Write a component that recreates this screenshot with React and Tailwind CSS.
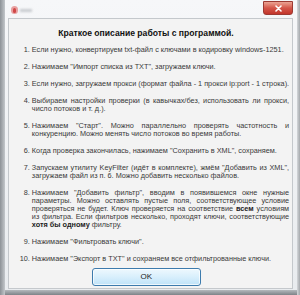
import React from 'react';

function Line({ j, children }) {
  return (
    <div className={`whitespace-nowrap h-[8px] leading-[8px] ${j ? 'text-justify [text-align-last:justify]' : ''}`}>
      {children}
    </div>
  );
}

function Item({ n, children }) {
  return (
    <div className="flex">
      <div className="w-[18px] shrink-0 text-right pr-[1px] leading-[8px]">{n}</div>
      <div className="flex-1 pl-[1px]">{children}</div>
    </div>
  );
}

export default function App() {
  return (
    <div className="w-[300px] h-[295px] flex bg-[#9a9fa4] overflow-hidden font-['Liberation_Sans',Arial,sans-serif]">
      {/* window behind, left edge */}
      <div className="w-[5px] h-full bg-gradient-to-r from-[#8d9297] to-[#c3c7cb]" />

      <div className="flex-1 flex flex-col">
        <div className="flex-1 flex flex-col bg-gradient-to-b from-[#f6f7f9] to-[#e9ecef] pl-[3px] pr-[4px] pb-[1px]">
          {/* title bar */}
          <div className="h-[18px] flex items-start justify-between">
            <div className="flex items-center gap-[2px] pt-[6px] pl-[3px]">
              <div className="w-[7px] h-[8px] rounded-full bg-[#e8a0a0] flex items-center justify-center">
                <div className="w-[3px] h-[5px] rounded-full bg-[#d04848]" />
              </div>
              <div className="w-[12px] h-[3px] bg-[#c9ccd0] blur-[1px]" />
            </div>
            <div className="mt-[1px] w-[30px] h-[14px] rounded-b-[3px] border border-[#9c3a33] bg-gradient-to-b from-[#eaa394] via-[#d4564a] to-[#c2352b] flex items-center justify-center">
              <svg width="7" height="7" viewBox="0 0 7 7">
                <path d="M1 1 L6 6 M6 1 L1 6" stroke="#ffffff" strokeWidth="1.6" strokeLinecap="round" />
              </svg>
            </div>
          </div>

          {/* dialog body */}
          <div className="flex-1 border border-[#c4c8cc] bg-[#f3f3f3] flex flex-col pl-[4px] pr-[3px] pt-[8px] text-[7.3px] text-[#3a3a3a]">
            <div className="text-center pr-[10px] text-[8.6px] font-bold text-[#111] leading-[12px] whitespace-nowrap">
              Краткое описание работы с программой.
            </div>

            <div className="mt-[7px] flex flex-col gap-[9px]">
              <Item n="1.">
                <Line>Если нужно, конвертируем txt-файл с ключами в кодировку windows-1251.</Line>
              </Item>
              <Item n="2.">
                <Line>Нажимаем "Импорт списка из TXT", загружаем ключи.</Line>
              </Item>
              <Item n="3.">
                <Line>Если нужно, загружаем прокси (формат файла - 1 прокси ip:port - 1 строка).</Line>
              </Item>
              <Item n="4.">
                <Line j>Выбираем настройки проверки (в кавычках/без, использовать ли прокси,</Line>
                <Line>число потоков и т. д.).</Line>
              </Item>
              <Item n="5.">
                <Line j>Нажимаем "Старт". Можно параллельно проверять частотность и</Line>
                <Line>конкуренцию. Можно менять число потоков во время работы.</Line>
              </Item>
              <Item n="6.">
                <Line>Когда проверка закончилась, нажимаем "Сохранить в XML", сохраняем.</Line>
              </Item>
              <Item n="7.">
                <Line j>Запускаем утилиту KeyFilter (идёт в комплекте), жмём "Добавить из XML",</Line>
                <Line>загружаем файл из п. 6. Можно добавить несколько файлов.</Line>
              </Item>
              <Item n="8.">
                <Line j>Нажимаем "Добавить фильтр", вводим в появившемся окне нужные</Line>
                <Line j>параметры. Можно оставлять пустые поля, соответствующее условие</Line>
                <Line j>
                  проверяться не будет. Ключ проверяется на соответствие <b className="text-[#222]">всем</b> условиям
                </Line>
                <Line j>из фильтра. Если фильтров несколько, проходят ключи, соответствующие</Line>
                <Line>
                  <b className="text-[#222]">хотя бы одному</b> фильтру.
                </Line>
              </Item>
              <Item n="9.">
                <Line>Нажимаем "Фильтровать ключи".</Line>
              </Item>
              <Item n="10.">
                <Line>Нажимаем "Экспорт в TXT" и сохраняем все отфильтрованные ключи.</Line>
              </Item>
            </div>

            <div className="mt-[5px] ml-[79px] w-[109px] h-[18px] rounded-[3px] border border-[#3d7bad] bg-gradient-to-b from-[#eef8fe] via-[#d8effc] to-[#bfe3f8] shadow-[inset_0_0_0_1px_rgba(255,255,255,0.7)] flex items-center justify-center text-[8px] text-[#222]">
              OK
            </div>
          </div>
        </div>
        <div className="h-[5px] bg-gradient-to-b from-[#b5b9bd] to-[#7e8388]" />
      </div>

      {/* window behind, right edge */}
      <div className="w-[3px] h-full bg-gradient-to-r from-[#d4d7da] to-[#a4a8ac]" />
    </div>
  );
}
